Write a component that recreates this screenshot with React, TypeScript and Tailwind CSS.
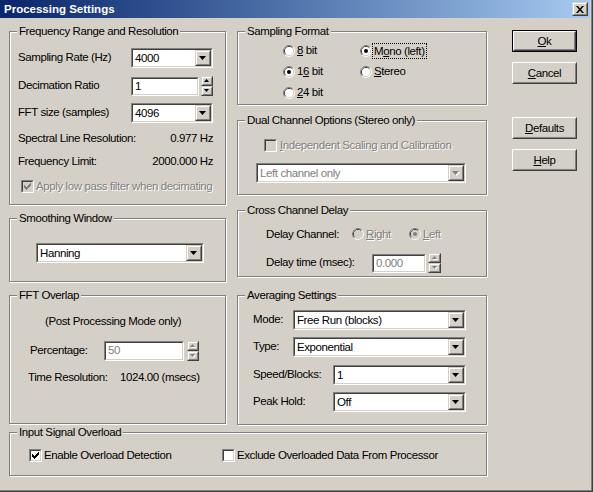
import React from 'react';

type Kids = { children?: React.ReactNode; className?: string };

const dim = 'text-[#808080] [text-shadow:1px_1px_0_#fff]';

function Group({ title, className = '', children }: Kids & { title: string }) {
  return (
    <div className={`relative flex flex-col border border-[#808080] shadow-[inset_1px_1px_0_#fff,1px_1px_0_#fff] ${className}`}>
      <span className="absolute -top-[8px] left-[7px] bg-[#d4d0c8] px-[2px] leading-[14px]">{title}</span>
      {children}
    </div>
  );
}

function Sunken({ className = '', bg = 'bg-white', children }: Kids & { bg?: string }) {
  return (
    <div className={`flex border border-[#808080] border-r-white border-b-white ${className}`}>
      <div className={`flex min-w-0 flex-1 border border-[#404040] border-r-[#d4d0c8] border-b-[#d4d0c8] ${bg}`}>{children}</div>
    </div>
  );
}

function Bevel({ className = '', children }: Kids) {
  return (
    <div className={`flex border border-[#d4d0c8] border-r-[#404040] border-b-[#404040] ${className}`}>
      <div className="flex flex-1 items-center justify-center border border-white border-r-[#808080] border-b-[#808080] bg-[#d4d0c8]">
        {children}
      </div>
    </div>
  );
}

function Arrow({ up = false, small = false, disabled = false }: { up?: boolean; small?: boolean; disabled?: boolean }) {
  const w = small ? 5 : 7;
  const h = small ? 3 : 4;
  const pts = up ? `0,${h} ${w},${h} ${w / 2},0` : `0,0 ${w},0 ${w / 2},${h}`;
  return (
    <svg width={w + 1} height={h + 1} viewBox={`0 0 ${w + 1} ${h + 1}`}>
      {disabled && <polygon points={pts} fill="#fff" transform="translate(1,1)" />}
      <polygon points={pts} fill={disabled ? '#808080' : '#000'} />
    </svg>
  );
}

function Combo({ value, className = '', disabled = false }: { value: string; className?: string; disabled?: boolean }) {
  return (
    <Sunken className={`h-[20px] shrink-0 ${className}`}>
      <span className={`flex-1 truncate pl-[2px] leading-[16px] ${disabled ? 'text-[#808080]' : ''}`}>{value}</span>
      <Bevel className="w-[16px]">
        <Arrow disabled={disabled} />
      </Bevel>
    </Sunken>
  );
}

function Edit({ value, className = '', disabled = false }: { value: string; className?: string; disabled?: boolean }) {
  return (
    <Sunken className={`shrink-0 ${className}`}>
      <span className={`flex-1 pl-[2px] leading-[15px] ${disabled ? 'text-[#808080]' : ''}`}>{value}</span>
    </Sunken>
  );
}

function Spin({ className = '', disabled = false }: { className?: string; disabled?: boolean }) {
  return (
    <div className={`flex shrink-0 flex-col ${className}`}>
      <Bevel className="flex-1">
        <Arrow up small disabled={disabled} />
      </Bevel>
      <Bevel className="flex-1">
        <Arrow small disabled={disabled} />
      </Bevel>
    </div>
  );
}

function Check({ checked = false, disabled = false }: { checked?: boolean; disabled?: boolean }) {
  return (
    <Sunken className="h-[13px] w-[13px] shrink-0" bg={disabled ? 'bg-[#d4d0c8]' : 'bg-white'}>
      {checked && (
        <svg width="9" height="9" viewBox="0 0 9 9">
          <path
            d="M1 3h1v3h-1z M2 4h1v3h-1z M3 5h1v3h-1z M4 4h1v3h-1z M5 3h1v3h-1z M6 2h1v3h-1z M7 1h1v3h-1z"
            fill={disabled ? '#808080' : '#000'}
          />
        </svg>
      )}
    </Sunken>
  );
}

function Radio({ checked = false, disabled = false }: { checked?: boolean; disabled?: boolean }) {
  return (
    <svg width="12" height="12" viewBox="0 0 12 12" className="shrink-0">
      <path d="M2.11 9.89A5.5 5.5 0 0 1 9.89 2.11" fill="none" stroke="#808080" />
      <path d="M9.89 2.11A5.5 5.5 0 0 1 2.11 9.89" fill="none" stroke="#fff" />
      <path d="M2.82 9.18A4.5 4.5 0 0 1 9.18 2.82" fill="none" stroke="#404040" />
      <path d="M9.18 2.82A4.5 4.5 0 0 1 2.82 9.18" fill="none" stroke="#d4d0c8" />
      <circle cx="6" cy="6" r="4" fill={disabled ? '#d4d0c8' : '#fff'} />
      {checked && <circle cx="6" cy="6" r="2" fill={disabled ? '#808080' : '#000'} />}
    </svg>
  );
}

function Button({ children, isDefault = false, className = '' }: Kids & { isDefault?: boolean }) {
  return (
    <div className={`flex h-[22px] ${isDefault ? 'border border-black' : ''} ${className}`}>
      <div className="flex flex-1 border border-white border-r-[#404040] border-b-[#404040]">
        <div className="flex flex-1 items-center justify-center border border-[#d4d0c8] border-r-[#808080] border-b-[#808080] leading-[14px]">
          {children}
        </div>
      </div>
    </div>
  );
}

const U = ({ children }: Kids) => <span className="underline">{children}</span>;

export default function App() {
  return (
    <div
      className="h-[492px] w-[593px] overflow-hidden border-r border-b border-[#404040] bg-[#d4d0c8] text-[11.5px] tracking-[-0.4px] whitespace-nowrap text-black"
      style={{ fontFamily: '"Liberation Sans", Arial, sans-serif' }}
    >
      <div className="flex h-full flex-col border-r border-b border-[#808080] pr-[1px]">
        {/* title bar */}
        <div className="flex h-[18px] shrink-0 items-center justify-between bg-linear-to-r from-[#0a246a] to-[#a6caf0] pr-[2px] pl-[4px]">
          <span className="text-[11.5px] font-bold tracking-normal leading-[14px] text-white">Processing Settings</span>
          <Bevel className="h-[14px] w-[16px]">
            <svg width="8" height="7" viewBox="0 0 8 7">
              <path d="M0 0h2l2 2.5 2-2.5h2l-3 3.5 3 3.5h-2l-2-2.5-2 2.5h-2l3-3.5z" fill="#000" />
            </svg>
          </Bevel>
        </div>

        <div className="flex flex-col pt-[13px] pl-[9px]">
          <div className="flex">
            {/* left column */}
            <div className="flex w-[217px] flex-col gap-[13px]">
              <Group title="Frequency Range and Resolution" className="h-[174px] pt-[16px] pr-[12px] pl-[8px]">
                <div className="flex h-[20px] items-center justify-between">
                  <span>Sampling Rate (Hz)</span>
                  <Combo value="4000" className="w-[82px]" />
                </div>
                <div className="mt-[8px] flex h-[20px] items-center justify-between">
                  <span>Decimation Ratio</span>
                  <div className="flex items-center gap-[2px]">
                    <Edit value="1" className="h-[19px] w-[68px]" />
                    <Spin className="h-[20px] w-[12px]" />
                  </div>
                </div>
                <div className="mt-[7px] flex h-[20px] items-center justify-between">
                  <span>FFT size (samples)</span>
                  <Combo value="4096" className="w-[82px]" />
                </div>
                <div className="mt-[8px] flex h-[14px] items-center justify-between leading-[14px]">
                  <span>Spectral Line Resolution:</span>
                  <span>0.977 Hz</span>
                </div>
                <div className="mt-[9px] flex h-[14px] items-center justify-between leading-[14px]">
                  <span>Frequency Limit:</span>
                  <span>2000.000 Hz</span>
                </div>
                <div className="mt-[11px] ml-[3px] flex h-[14px] items-center gap-[2px] leading-[14px]">
                  <Check checked disabled />
                  <span className={dim}>Apply low pass filter when decimating</span>
                </div>
              </Group>

              <Group title="Smoothing Window" className="h-[64px] pt-[24px] pl-[26px]">
                <Combo value="Hanning" className="w-[168px]" />
              </Group>

              <Group title="FFT Overlap" className="h-[129px]">
                <div className="mt-[18px] h-[14px] pl-[35px] leading-[14px]">(Post Processing Mode only)</div>
                <div className="mt-[13px] flex h-[20px] items-center pl-[20px]">
                  <span className="w-[74px]">Percentage:</span>
                  <Edit value="50" disabled className="h-[20px] w-[80px]" />
                  <Spin disabled className="ml-[3px] h-[20px] w-[12px]" />
                </div>
                <div className="mt-[9px] flex h-[14px] items-center pl-[18px] leading-[14px]">
                  <span className="w-[92px]">Time Resolution:</span>
                  <span>1024.00 (msecs)</span>
                </div>
              </Group>
            </div>

            {/* middle column */}
            <div className="ml-[11px] flex w-[250px] flex-col">
              <Group title="Sampling Format" className="h-[74px] pt-[8px] pl-[45px]">
                <div className="flex h-[21px] items-center">
                  <div className="flex w-[77px] items-center gap-[2px]">
                    <Radio />
                    <span>
                      <U>8</U> bit
                    </span>
                  </div>
                  <div className="flex items-center gap-[1px]">
                    <Radio checked />
                    <span className="px-[1px] leading-[14px] outline outline-1 outline-dotted outline-black">
                      M<U>o</U>no (left)
                    </span>
                  </div>
                </div>
                <div className="flex h-[21px] items-center">
                  <div className="flex w-[77px] items-center gap-[2px]">
                    <Radio checked />
                    <span>
                      1<U>6</U> bit
                    </span>
                  </div>
                  <div className="flex items-center gap-[2px]">
                    <Radio />
                    <span>
                      <U>S</U>tereo
                    </span>
                  </div>
                </div>
                <div className="flex h-[21px] items-center gap-[2px]">
                  <Radio />
                  <span>
                    <U>2</U>4 bit
                  </span>
                </div>
              </Group>

              <Group title="Dual Channel Options (Stereo only)" className="mt-[15px] h-[75px] pl-[26px]">
                <div className="mt-[17px] flex h-[14px] items-center gap-[3px] leading-[14px]">
                  <Check disabled />
                  <span className={dim}>
                    <U>I</U>ndependent Scaling and Calibration
                  </span>
                </div>
                <Combo value="Left channel only" disabled className="mt-[11px] -ml-[8px] w-[210px]" />
              </Group>

              <Group title="Cross Channel Delay" className="mt-[15px] h-[67px] pl-[28px]">
                <div className="mt-[16px] flex h-[14px] items-center leading-[14px]">
                  <span className="w-[86px]">Delay Channel:</span>
                  <div className="flex w-[57px] items-center gap-[2px]">
                    <Radio disabled />
                    <span className={dim}>
                      <U>R</U>ight
                    </span>
                  </div>
                  <div className="flex items-center gap-[2px]">
                    <Radio checked disabled />
                    <span className={dim}>
                      <U>L</U>eft
                    </span>
                  </div>
                </div>
                <div className="mt-[12px] flex h-[20px] items-center">
                  <span className="w-[106px]">Delay time (msec):</span>
                  <Edit value="0.000" disabled className="h-[19px] w-[54px]" />
                  <Spin disabled className="ml-[2px] h-[20px] w-[13px]" />
                </div>
              </Group>

              <Group title="Averaging Settings" className="mt-[18px] h-[130px] pl-[15px]">
                <div className="mt-[14px] flex h-[20px] items-center">
                  <span className="w-[40px]">Mode:</span>
                  <Combo value="Free Run (blocks)" className="w-[173px]" />
                </div>
                <div className="mt-[7px] flex h-[20px] items-center">
                  <span className="w-[40px]">Type:</span>
                  <Combo value="Exponential" className="w-[173px]" />
                </div>
                <div className="mt-[8px] flex h-[20px] items-center">
                  <span className="w-[80px]">Speed/Blocks:</span>
                  <Combo value="1" className="w-[133px]" />
                </div>
                <div className="mt-[7px] flex h-[20px] items-center">
                  <span className="w-[80px]">Peak Hold:</span>
                  <Combo value="Off" className="w-[133px]" />
                </div>
              </Group>
            </div>

            {/* buttons */}
            <div className="-mt-[1px] ml-[25px] flex w-[65px] flex-col">
              <Button isDefault>
                <U>O</U>k
              </Button>
              <Button className="mt-[10px]">
                <U>C</U>ancel
              </Button>
              <Button className="mt-[33px]">
                <U>D</U>efaults
              </Button>
              <Button className="mt-[10px]">
                <U>H</U>elp
              </Button>
            </div>
          </div>

          <Group title="Input Signal Overload" className="mt-[7px] h-[44px] w-[478px] pl-[19px]">
            <div className="mt-[15px] flex h-[14px] items-center leading-[14px]">
              <div className="flex w-[193px] items-center gap-[2px]">
                <Check checked />
                <span>Enable Overload Detection</span>
              </div>
              <div className="flex items-center gap-[2px]">
                <Check />
                <span>Exclude Overloaded Data From Processor</span>
              </div>
            </div>
          </Group>
        </div>
      </div>
    </div>
  );
}
